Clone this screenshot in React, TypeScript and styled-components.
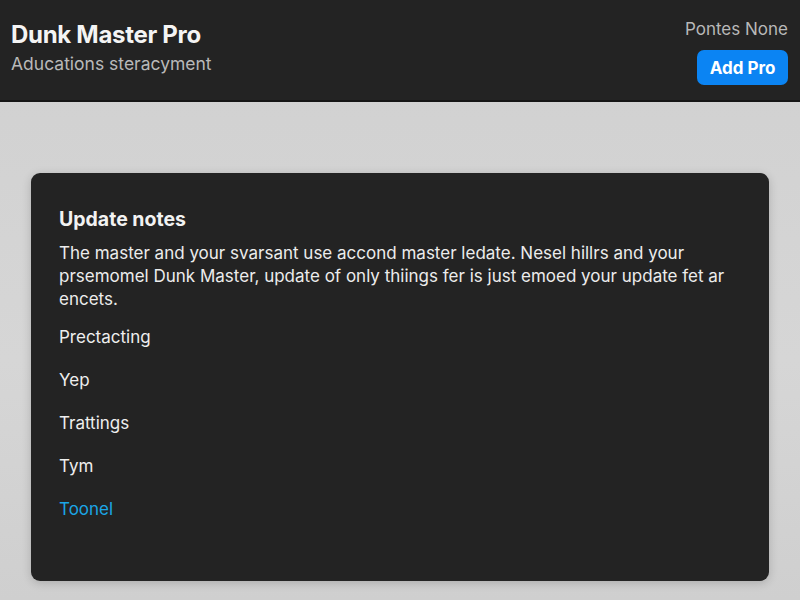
import React from "react";
import styled, { createGlobalStyle } from "styled-components";

const Global = createGlobalStyle`
  html, body { margin: 0; padding: 0; }
  body {
    background: #d3d3d3;
    font-family: Inter, "Open Sans", "Noto Sans", sans-serif;
    width: 800px;
    height: 600px;
    overflow: hidden;
  }
`;

const Page = styled.div`
  width: 800px;
  height: 600px;
  display: flex;
  flex-direction: column;
  background: linear-gradient(#d0d0d0, #d6d6d6 60%, #cfcfcf);
`;

const Header = styled.header`
  height: 102px;
  flex-shrink: 0;
  background: #232323;
  border-bottom: 2px solid #161616;
  box-sizing: border-box;
  display: flex;
  justify-content: space-between;
  align-items: flex-start;
  padding: 21px 12px 0 11px;
`;

const Brand = styled.div`
  display: flex;
  flex-direction: column;
`;

const Title = styled.h1`
  margin: 0;
  font-size: 24px;
  font-weight: 700;
  color: #f4f4f4;
  letter-spacing: -0.3px;
  line-height: 28px;
`;

const Subtitle = styled.div`
  margin-top: 3px;
  font-size: 17.5px;
  color: #b9b9b9;
  line-height: 24px;
`;

const Actions = styled.div`
  display: flex;
  flex-direction: column;
  align-items: flex-end;
  gap: 10px;
  margin-top: -3px;
`;

const Status = styled.div`
  font-size: 17px;
  color: #b8b8b8;
  line-height: 22px;
`;

const Button = styled.button`
  background: #0b84f3;
  color: #fff;
  border: none;
  border-radius: 7px;
  width: 91px;
  height: 35px;
  font-family: inherit;
  font-size: 17px;
  font-weight: 700;
  cursor: pointer;
`;

const Main = styled.main`
  flex: 1;
  padding: 71px 31px 19px 31px;
  display: flex;
  min-width: 0;
`;

const Card = styled.section`
  width: 738px;
  box-sizing: border-box;
  background: #232323;
  border-radius: 9px;
  box-shadow: 0 2px 10px rgba(0, 0, 0, 0.18);
  padding: 34px 28px 0 28px;
  display: flex;
  flex-direction: column;
`;

const CardTitle = styled.h2`
  margin: 0;
  font-size: 19.5px;
  font-weight: 700;
  color: #f2f2f2;
  line-height: 24px;
`;

const Paragraph = styled.p`
  margin: 11px 0 0 0;
  font-size: 17px;
  line-height: 23px;
  color: #ececec;
  white-space: nowrap;
`;

const List = styled.ul`
  list-style: none;
  margin: 14px 0 0 0;
  padding: 0;
  display: flex;
  flex-direction: column;
  gap: 19px;
`;

const Item = styled.li<{ $accent?: boolean }>`
  font-size: 17px;
  line-height: 24px;
  color: ${(p) => (p.$accent ? "#1ba6e6" : "#eeeeee")};
`;

const items = ["Prectacting", "Yep", "Trattings", "Tym"];

export default function App() {
  return (
    <>
      <Global />
      <Page>
        <Header>
          <Brand>
            <Title>Dunk Master Pro</Title>
            <Subtitle>Aducations steracyment</Subtitle>
          </Brand>
          <Actions>
            <Status>Pontes None</Status>
            <Button>Add Pro</Button>
          </Actions>
        </Header>
        <Main>
          <Card>
            <CardTitle>Update notes</CardTitle>
            <Paragraph>
              The master and your svarsant use accond master ledate. Nesel hillrs and your
              <br />
              prsemomel Dunk Master, update of only thiings fer is just emoed your update fet ar
              <br />
              encets.
            </Paragraph>
            <List>
              {items.map((t) => (
                <Item key={t}>{t}</Item>
              ))}
              <Item $accent>Toonel</Item>
            </List>
          </Card>
        </Main>
      </Page>
    </>
  );
}
